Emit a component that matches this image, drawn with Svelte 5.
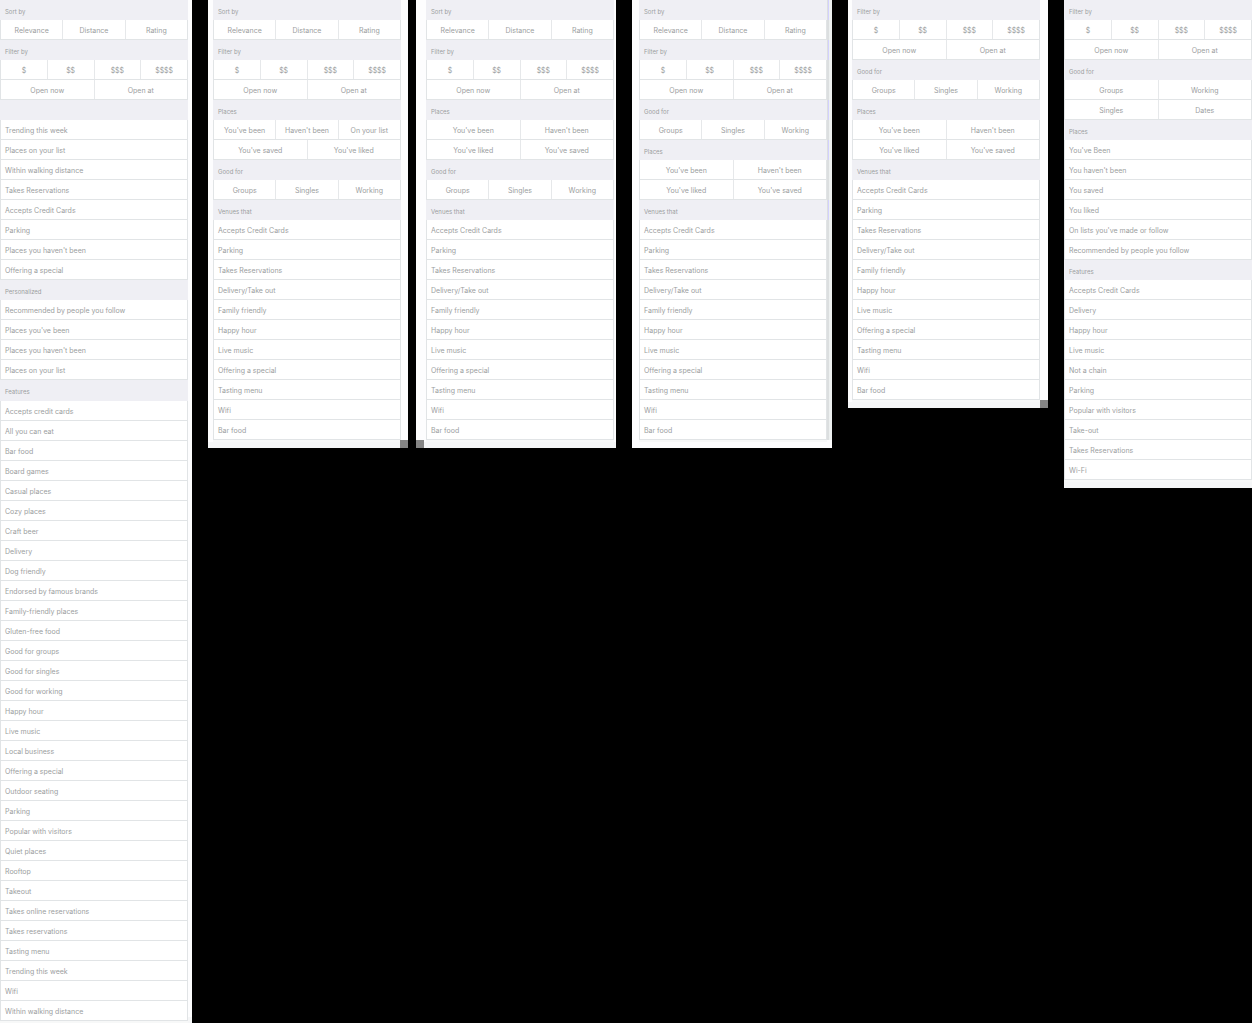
<script>
  const sort = { title: 'Sort by', rows: [['Relevance', 'Distance', 'Rating']] };
  const filter = { title: 'Filter by', rows: [['$', '$$', '$$$', '$$$$'], ['Open now', 'Open at']] };
  const goodFor = { title: 'Good for', rows: [['Groups', 'Singles', 'Working']] };
  const places = { title: 'Places', rows: [["You've been", "Haven't been"], ["You've liked", "You've saved"]] };
  const list = (title, items, extra = {}) => ({ title, rows: items.map((item) => [item]), ...extra });

  const venues = list('Venues that', [
    'Accepts Credit Cards', 'Parking', 'Takes Reservations', 'Delivery/Take out', 'Family friendly',
    'Happy hour', 'Live music', 'Offering a special', 'Tasting menu', 'Wifi', 'Bar food'
  ]);

  const panels = [
    {
      name: 'first',
      sections: [
        sort,
        filter,
        list('', [
          'Trending this week', 'Places on your list', 'Within walking distance', 'Takes Reservations',
          'Accepts Credit Cards', 'Parking', "Places you haven't been", 'Offering a special'
        ]),
        list('Personalized', [
          'Recommended by people you follow', "Places you've been", "Places you haven't been", 'Places on your list'
        ]),
        list('Features', [
          'Accepts credit cards', 'All you can eat', 'Bar food', 'Board games', 'Casual places', 'Cozy places',
          'Craft beer', 'Delivery', 'Dog friendly', 'Endorsed by famous brands', 'Family-friendly places',
          'Gluten-free food', 'Good for groups', 'Good for singles', 'Good for working', 'Happy hour',
          'Live music', 'Local business', 'Offering a special', 'Outdoor seating', 'Parking',
          'Popular with visitors', 'Quiet places', 'Rooftop', 'Takeout', 'Takes online reservations',
          'Takes reservations', 'Tasting menu', 'Trending this week', 'Wifi', 'Within walking distance'
        ], { tall: true })
      ]
    },
    {
      name: 'second',
      corner: 'right',
      sections: [
        sort,
        filter,
        { title: 'Places', rows: [["You've been", "Haven't been", 'On your list'], ["You've saved", "You've liked"]] },
        goodFor,
        venues
      ]
    },
    { name: 'third', corner: 'left', sections: [sort, filter, places, goodFor, venues] },
    { name: 'fourth', sections: [sort, filter, goodFor, places, venues] },
    { name: 'fifth', corner: 'right', sections: [filter, goodFor, places, venues] },
    {
      name: 'sixth',
      sections: [
        filter,
        { title: 'Good for', rows: [['Groups', 'Working'], ['Singles', 'Dates']] },
        list('Places', [
          "You've Been", "You haven't been", 'You saved', 'You liked', "On lists you've made or follow",
          'Recommended by people you follow'
        ]),
        list('Features', [
          'Accepts Credit Cards', 'Delivery', 'Happy hour', 'Live music', 'Not a chain', 'Parking',
          'Popular with visitors', 'Take-out', 'Takes Reservations', 'Wi-Fi'
        ])
      ]
    }
  ];
</script>

<main>
  {#each panels as panel}
    <article class="panel {panel.name}">
      <div class="body">
        {#each panel.sections as section}
          <section>
            {#if section.title}
              <h2 class="band" class:tall={section.tall}>{section.title}</h2>
            {:else}
              <div class="band"></div>
            {/if}
            {#each section.rows as row}
              <div class="row" class:single={row.length === 1}>
                {#each row as label}
                  <button type="button">{label}</button>
                {/each}
              </div>
            {/each}
          </section>
        {/each}
      </div>
      {#if panel.corner}
        <span class="corner {panel.corner}"></span>
      {/if}
    </article>
  {/each}
</main>

<style>
  :global(body) {
    margin: 0;
    background: #000;
  }
  main {
    display: grid;
    grid-template-columns:
      minmax(0, 192fr) 16px minmax(0, 200fr) 8px minmax(0, 200fr) 16px
      minmax(0, 200fr) 16px minmax(0, 200fr) 16px minmax(0, 188fr);
    align-items: start;
    min-height: 100vh;
    background: #000;
    font-family: Inter, 'Liberation Sans', sans-serif;
    color: #9b9ea0;
  }
  .panel {
    position: relative;
    grid-row: 1;
    padding: 0 7px 6px 5px;
    background: linear-gradient(to top, #f5f6f7 6px, #fdfdfe 6px);
  }
  .first {
    grid-column: 1;
    padding: 0 4px 0 0;
  }
  .second {
    grid-column: 3;
  }
  .third {
    grid-column: 5;
    padding: 0 2px 6px 10px;
  }
  .fourth {
    grid-column: 7;
    padding: 0 5px 6px 7px;
    background: #fdfdfe;
  }
  .fourth::after {
    content: '';
    position: absolute;
    inset: 0 0 8px auto;
    width: 5px;
    background: linear-gradient(to right, #dcdfe0 2px, #edf0f0 2px);
  }
  .fourth .band::after {
    content: '';
    position: absolute;
    z-index: 1;
    right: 3px;
    width: 1px;
    height: 20px;
    margin-top: -4px;
    background: #d3d0ff;
  }
  .fifth {
    grid-column: 9;
    padding: 0 8px 6px 4px;
  }
  .sixth {
    grid-column: 11;
    padding: 0 0 6px;
  }
  .body {
    border-bottom: 2px solid #f7f8f8;
  }
  .band {
    box-sizing: border-box;
    height: 20px;
    margin: 0;
    padding: 4px 5px 0;
    background: #efeff4;
    font-size: 6px;
    line-height: 16px;
    font-weight: 400;
    white-space: nowrap;
  }
  .band.tall {
    height: 21px;
  }
  .row {
    display: flex;
    height: 20px;
    box-sizing: border-box;
    border: 0 solid #e1e4e6;
    border-width: 0 1px 1px;
    background: #fff;
  }
  button {
    flex: 1 1 0;
    min-width: 0;
    margin: 0;
    padding: 3px 0 0;
    border: 0;
    border-left: 1px solid #e6e8ea;
    background: none;
    color: inherit;
    font: inherit;
    font-size: 7px;
    line-height: 16px;
    text-align: center;
    white-space: nowrap;
    cursor: pointer;
  }
  button:first-child {
    border-left: 0;
  }
  .single button {
    padding-left: 4px;
    text-align: left;
  }
  .corner {
    position: absolute;
    bottom: 0;
    width: 8px;
    height: 8px;
    background: #858585;
  }
  .corner.right {
    right: 0;
  }
  .corner.left {
    left: 0;
  }
</style>
